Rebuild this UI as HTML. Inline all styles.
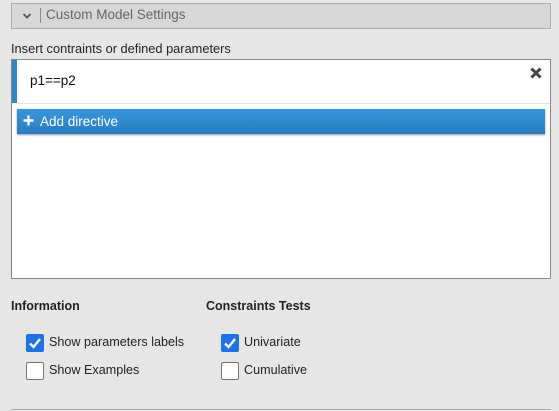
<!DOCTYPE html>
<html><head><style>
body{margin:0;width:559px;height:411px;background:#e6e6e6;font-family:"Liberation Sans",sans-serif;position:relative;overflow:hidden}
.a{position:absolute}
</style></head><body>
<div class="a" style="left:11px;top:3px;width:538px;height:24px;background:#d7d7d7;border:1px solid #adadad"></div>
<svg class="a" style="left:22px;top:12px" width="10" height="8"><path d="M1.5 2 L5 5.5 L8.5 2" stroke="#555" stroke-width="1.8" fill="none"/></svg>
<div class="a" style="left:40px;top:8px;width:1px;height:15px;background:#888"></div>
<div class="a" style="left:46px;top:7px;font-size:13.5px;color:#666">Custom Model Settings</div>
<div class="a" style="left:11px;top:41px;font-size:12.8px;color:#222">Insert contraints or defined parameters</div>
<div class="a" style="left:11px;top:59px;width:538px;height:218px;background:#fff;border:1px solid #888"></div>
<div class="a" style="left:12px;top:60px;width:5px;height:43px;background:#2f86c6"></div>
<div class="a" style="left:17px;top:103px;width:533px;height:1px;background:#e4e4e4"></div>
<div class="a" style="left:30px;top:73px;font-size:13.5px;color:#111">p1==p2</div>
<svg class="a" style="left:530px;top:67px" width="12" height="12"><path d="M1.5 1.5L10.5 10.5M10.5 1.5L1.5 10.5" stroke="#444" stroke-width="3"/></svg>
<div class="a" style="left:17px;top:109px;width:528px;height:25px;background:linear-gradient(#3597dc,#2a7dbd);box-shadow:0 1px 2px rgba(0,0,0,.4)"></div>
<svg class="a" style="left:23px;top:115px" width="11" height="11"><path d="M5.5 0.5V10.5M0.5 5.5H10.5" stroke="#fff" stroke-width="2.4"/></svg>
<div class="a" style="left:40px;top:114px;font-size:13.5px;color:#fff">Add directive</div>
<div class="a" style="left:11px;top:299px;font-size:12.5px;font-weight:bold;color:#222">Information</div>
<div class="a" style="left:206px;top:299px;font-size:12.5px;font-weight:bold;color:#222">Constraints Tests</div>
<div class="a" style="left:26px;top:334px;width:18px;height:18px;background:#1a73e8;border-radius:2px"></div>
<svg class="a" style="left:26px;top:334px" width="18" height="18"><path d="M4 9.5L7.5 13L14 5" stroke="#fff" stroke-width="2.4" fill="none"/></svg>
<div class="a" style="left:26px;top:362px;width:16px;height:16px;background:#fff;border:1px solid #777;border-radius:2px"></div>
<div class="a" style="left:221px;top:334px;width:18px;height:18px;background:#1a73e8;border-radius:2px"></div>
<svg class="a" style="left:221px;top:334px" width="18" height="18"><path d="M4 9.5L7.5 13L14 5" stroke="#fff" stroke-width="2.4" fill="none"/></svg>
<div class="a" style="left:221px;top:362px;width:16px;height:16px;background:#fff;border:1px solid #777;border-radius:2px"></div>
<div class="a" style="left:49px;top:335px;font-size:12.6px;color:#222">Show parameters labels</div>
<div class="a" style="left:49px;top:363px;font-size:12.6px;color:#222">Show Examples</div>
<div class="a" style="left:244px;top:335px;font-size:12.6px;color:#222">Univariate</div>
<div class="a" style="left:244px;top:363px;font-size:12.6px;color:#222">Cumulative</div>
<div class="a" style="left:11px;top:409px;width:540px;height:1px;background:#aaa"></div>
</body></html>
